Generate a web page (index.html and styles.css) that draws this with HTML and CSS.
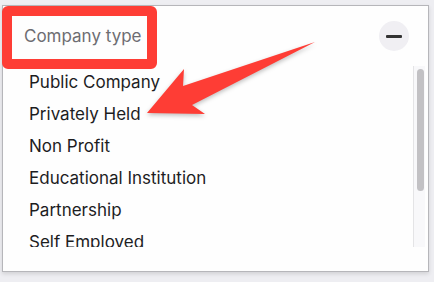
FILE: index.html
```html
<!DOCTYPE html>
<html lang="en">
<head>
    <meta charset="UTF-8">
    <title>Company type</title>
    <link rel="stylesheet" href="styles.css">
</head>
<body>
    <div class="panel">
        <div class="header">
            <span class="label">Company type</span>
            <button class="collapse" aria-label="Collapse"><span class="bar"></span></button>
        </div>
        <div class="body">
            <ul class="options">
                <li>Public Company</li>
                <li>Privately Held</li>
                <li>Non Profit</li>
                <li>Educational Institution</li>
                <li>Partnership</li>
                <li>Self Employed</li>
            </ul>
            <div class="scrollbar"><div class="thumb"></div></div>
        </div>
    </div>

    <!-- annotation overlay -->
    <div class="highlight"></div>
    <svg class="arrow" width="434" height="282" viewBox="0 0 434 282">
        <polygon points="147,113 184,69 183,86 315,42 192,105 205,114" fill="#fe3d35"/>
    </svg>
</body>
</html>
```

FILE: styles.css
```css
body {
    margin: 0;
    background-color: #eeeef2;
    font-family: Inter, "Noto Sans", sans-serif;
    width: 434px;
    height: 282px;
    overflow: hidden;
}
.panel {
    margin: 5px 0 0 2px;
    width: 425px;
    height: 265px;
    background-color: #fefefe;
    border: 1px solid #b6b6ba;
    box-shadow: 0 2px 4px rgba(0,0,0,0.12);
}
.header {
    display: flex;
    align-items: center;
    justify-content: space-between;
    height: 60px;
    padding: 0 19px 0 21px;
}
.label {
    font-size: 17px;
    color: #6d6d72;
}
.collapse {
    width: 30px;
    height: 30px;
    border: none;
    border-radius: 50%;
    background-color: #f0eff3;
    display: flex;
    align-items: center;
    justify-content: center;
    padding: 0;
}
.collapse .bar {
    width: 16px;
    height: 3px;
    background-color: #333;
    border-radius: 1px;
}
.body {
    display: flex;
    height: 181px;
    padding-right: 3px;
}
.options {
    flex: 1;
    list-style: none;
    margin: 0;
    padding: 0 0 0 26px;
    overflow: hidden;
}
.options li {
    height: 32px;
    line-height: 32px;
    font-size: 17px;
    color: #1d1d1f;
}
.scrollbar {
    width: 12px;
    border-left: 1px solid #e4e4e6;
    background-color: #f8f8fa;
    padding: 3px 1px 0 3px;
    box-sizing: border-box;
}
.thumb {
    width: 7px;
    height: 122px;
    border-radius: 4px;
    background-color: #c2c1c4;
}
.highlight {
    position: absolute;
    left: 2px;
    top: 6px;
    width: 135px;
    height: 43px;
    border: 10px solid #fe3d35;
    border-radius: 6px;
}
.arrow {
    position: absolute;
    left: 0;
    top: 0;
    filter: drop-shadow(0 2px 2px rgba(0,0,0,0.25));
}
```
